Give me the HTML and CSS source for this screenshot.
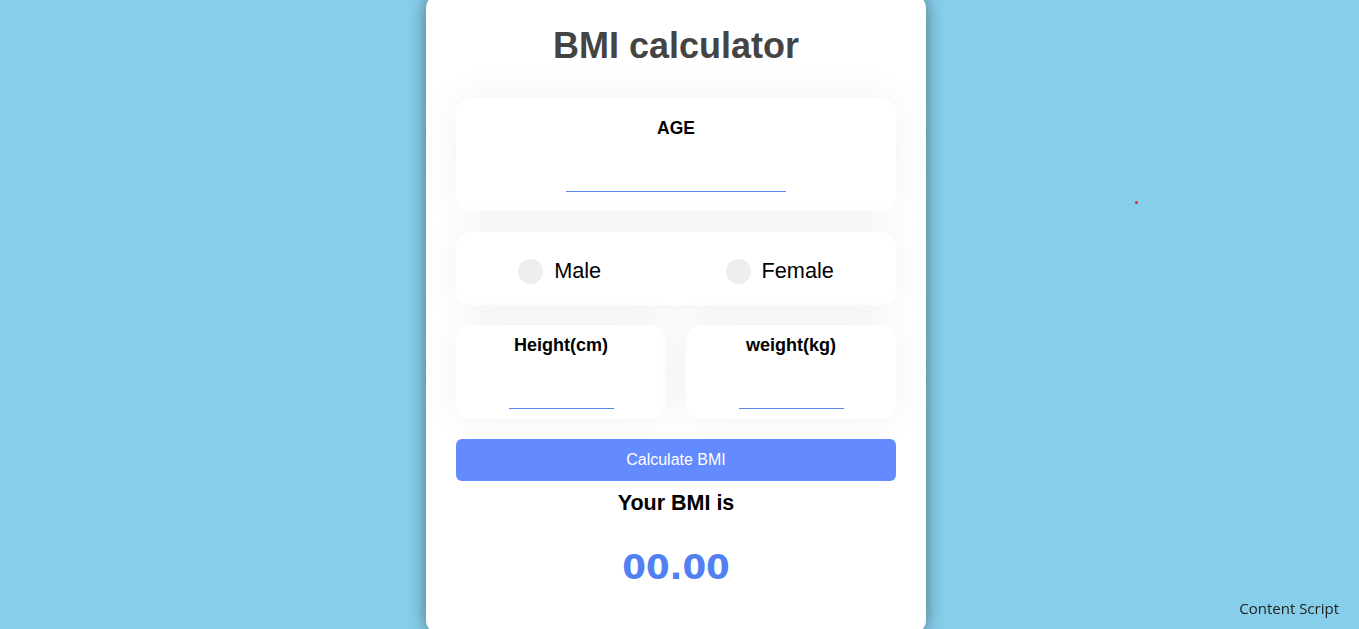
FILE: index.html
```html
<!DOCTYPE html>
<html>
<head>
<meta charset="utf-8">
<title>BMI calculator</title>
<link rel="stylesheet" href="styles.css">
</head>
<body>
<div class="card">
  <h1 class="title">BMI calculator</h1>
  <div class="panel age">
    <div class="label">AGE</div>
    <input class="field wide" type="text">
  </div>
  <div class="panel gender">
    <label class="radio"><span class="dot"></span>Male</label>
    <label class="radio"><span class="dot"></span>Female</label>
  </div>
  <div class="pair">
    <div class="panel small">
      <div class="label sm">Height(cm)</div>
      <input class="field narrow" type="text">
    </div>
    <div class="panel small">
      <div class="label sm">weight(kg)</div>
      <input class="field narrow" type="text">
    </div>
  </div>
  <button class="calc">Calculate BMI</button>
  <div class="result-label">Your BMI is</div>
  <div class="result">00.00</div>
</div>
<span class="red-dot"></span>
<div class="content-script">Content Script</div>
</body>
</html>
```
FILE: styles.css
```css
html, body {
  margin: 0;
  padding: 0;
  height: 100%;
  overflow: hidden;
}
body {
  background: #87ceeb;
  font-family: "Liberation Sans", Arial, sans-serif;
  padding-right: 7px;
  box-sizing: border-box;
}
.card {
  width: 500px;
  margin: -6px auto 0;
  height: 640px;
  box-sizing: border-box;
  background: #fff;
  border-radius: 14px;
  box-shadow: 0 0 18px rgba(0, 0, 0, 0.45);
  padding: 31px 30px 0;
  display: flex;
  flex-direction: column;
}
.title {
  margin: 0;
  font-size: 36px;
  line-height: 42px;
  font-weight: bold;
  color: #444;
  text-align: center;
}
.panel {
  background: #fff;
  border-radius: 15px;
  box-shadow: 0 0 40px rgba(0, 0, 0, 0.06);
  display: flex;
  flex-direction: column;
  align-items: center;
}
.age {
  margin-top: 31px;
  height: 113px;
  padding-top: 20px;
  box-sizing: border-box;
}
.label {
  font-size: 17.5px;
  line-height: 20px;
  font-weight: bold;
  color: #000;
}
.label.sm {
  font-size: 18px;
}
.field {
  border: none;
  border-bottom: 1px solid #5a84ea;
  outline: none;
  background: transparent;
  height: 31px;
  padding: 0;
  box-sizing: border-box;
}
.wide {
  width: 220px;
  margin-top: 23px;
}
.gender {
  margin-top: 21px;
  height: 73px;
  flex-direction: row;
  justify-content: space-around;
  align-items: center;
  padding-top: 5px;
  box-sizing: border-box;
}
.radio {
  display: flex;
  align-items: center;
  gap: 11px;
  font-size: 21.7px;
  color: #000;
}
.dot {
  width: 25px;
  height: 25px;
  border-radius: 50%;
  background: #eee;
}
.pair {
  margin-top: 20px;
  display: flex;
  gap: 20px;
}
.small {
  flex: 1;
  height: 94px;
  padding-top: 10px;
  box-sizing: border-box;
}
.narrow {
  width: 105px;
  margin-top: 23px;
}
.calc {
  margin-top: 20px;
  height: 42px;
  border: none;
  border-radius: 6px;
  background: #638aff;
  color: #fff;
  font-family: "Liberation Sans", Arial, sans-serif;
  font-size: 16px;
}
.result-label {
  margin-top: 10px;
  font-size: 21.5px;
  line-height: 24px;
  font-weight: bold;
  text-align: center;
  color: #000;
}
.result {
  margin-top: 32px;
  font-family: "DejaVu Sans", sans-serif;
  font-size: 34px;
  line-height: 40px;
  font-weight: bold;
  text-align: center;
  color: #5080f2;
}
.red-dot {
  position: absolute;
  left: 1135px;
  top: 201px;
  width: 3px;
  height: 3px;
  border-radius: 50%;
  background: #e0272c;
}
.content-script {
  position: fixed;
  right: 20px;
  bottom: 11px;
  font-family: "Open Sans", "Noto Sans", sans-serif;
  font-size: 15px;
  color: #222;
}
```
